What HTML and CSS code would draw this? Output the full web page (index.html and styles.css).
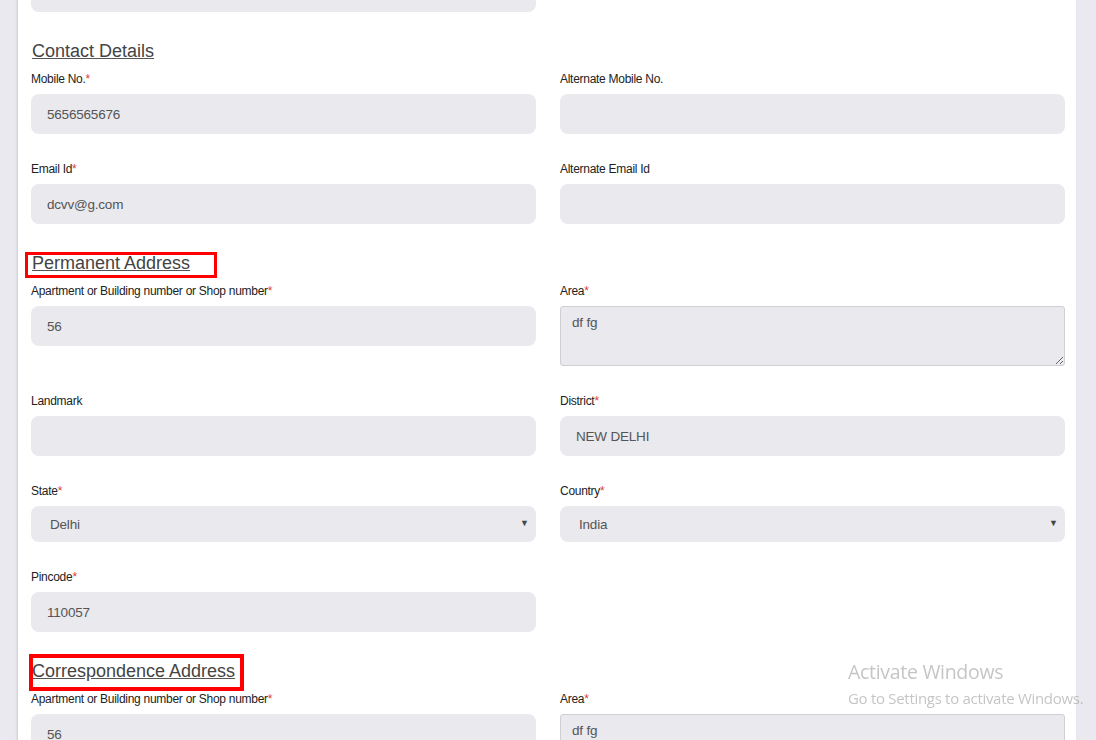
FILE: index.html
```html
<!DOCTYPE html>
<html lang="en">

<head>
  <meta charset="UTF-8">
  <meta name="viewport" content="width=device-width, initial-scale=1.0">
  <title>Registration - Address Details</title>
  <link rel="stylesheet" href="styles.css">
</head>

<body>
  <div id="container">
    <form name="regForm" class="regForm">
      <!-- previous row (scrolled) -->
      <div class="row first">
        <div class="field"><input type="text" class="inp"></div>
        <div class="field"></div>
      </div>

      <h3 class="secTitle"><span>Contact Details</span></h3>
      <div class="row">
        <div class="field">
          <label>Mobile No.<em>*</em></label>
          <input type="text" class="inp" value="5656565676">
        </div>
        <div class="field">
          <label>Alternate Mobile No.</label>
          <input type="text" class="inp">
        </div>
      </div>
      <div class="row">
        <div class="field">
          <label>Email Id<em>*</em></label>
          <input type="text" class="inp" value="dcvv@g.com">
        </div>
        <div class="field">
          <label>Alternate Email Id</label>
          <input type="text" class="inp">
        </div>
      </div>

      <h3 class="secTitle"><span class="marked perm">Permanent Address</span></h3>
      <div class="row">
        <div class="field">
          <label>Apartment or Building number or Shop number<em>*</em></label>
          <input type="text" class="inp" value="56">
        </div>
        <div class="field">
          <label>Area<em>*</em></label>
          <textarea class="area">df fg</textarea>
        </div>
      </div>
      <div class="row">
        <div class="field">
          <label>Landmark</label>
          <input type="text" class="inp">
        </div>
        <div class="field">
          <label>District<em>*</em></label>
          <input type="text" class="inp" value="NEW DELHI">
        </div>
      </div>
      <div class="row">
        <div class="field">
          <label>State<em>*</em></label>
          <span class="selWrap">
            <select class="sel">
              <option>Delhi</option>
            </select>
          </span>
        </div>
        <div class="field">
          <label>Country<em>*</em></label>
          <span class="selWrap">
            <select class="sel">
              <option>India</option>
            </select>
          </span>
        </div>
      </div>
      <div class="row">
        <div class="field">
          <label>Pincode<em>*</em></label>
          <input type="text" class="inp" value="110057">
        </div>
        <div class="field"></div>
      </div>

      <h3 class="secTitle second"><span class="marked corr">Correspondence Address</span></h3>
      <div class="row">
        <div class="field">
          <label>Apartment or Building number or Shop number<em>*</em></label>
          <input type="text" class="inp" value="56">
        </div>
        <div class="field">
          <label>Area<em>*</em></label>
          <textarea class="area">df fg</textarea>
        </div>
      </div>
    </form>
  </div>

  <div class="winMark">
    <p class="big">Activate Windows</p>
    <p>Go to Settings to activate Windows.</p>
  </div>
</body>

</html>
```

FILE: styles.css
```css
html,
body {
  margin: 0;
  padding: 0;
  height: 100%;
  overflow: hidden;
}

body {
  background-color: #e9e9ef;
  font-family: "Liberation Sans", Arial, sans-serif;
  color: #222;
}

#container {
  width: 1058px;
  min-height: 100%;
  margin-left: 18px;
  background-color: #fff;
  box-shadow: -1px 0 2px rgba(0, 0, 0, 0.12);
}

.regForm {
  padding: 0 11px 40px 13px;
}

.row {
  display: grid;
  grid-template-columns: 505px 505px;
  column-gap: 24px;
  margin-bottom: 26px;
}

.row.first {
  margin-top: -28px;
}

.field label {
  display: block;
  height: 17px;
  line-height: 18px;
  margin-bottom: 7px;
  font-size: 12px;
  letter-spacing: -0.28px;
  color: #222;
}

.field label em {
  font-style: normal;
  color: #e0403c;
}

.inp,
.sel,
.area {
  box-sizing: border-box;
  width: 100%;
  font-family: "Liberation Sans", Arial, sans-serif;
  font-size: 13.5px;
  letter-spacing: -0.2px;
  color: #555;
  background-color: #e9e9ee;
  outline: none;
}

.inp {
  display: block;
  height: 40px;
  padding: 0 16px;
  border: none;
  border-radius: 8px;
}

/* 선택 박스 */
.selWrap {
  position: relative;
  display: block;
}

.sel {
  display: block;
  height: 36px;
  padding: 0 19px;
  border: none;
  border-radius: 8px;
  appearance: none;
  -webkit-appearance: none;
}

.selWrap::after {
  content: "\25BC";
  position: absolute;
  right: 7px;
  top: 12px;
  font-size: 9px;
  color: #444;
  pointer-events: none;
}

.area {
  display: block;
  height: 60px;
  padding: 8px 11px;
  border: 1px solid #cfcfd4;
  border-radius: 3px;
  resize: vertical;
}

/* 섹션 제목 */
.secTitle {
  height: 26px;
  line-height: 26px;
  margin: 0 0 6px;
  font-size: 18px;
  font-weight: normal;
  color: #444;
  padding-left: 1px;
}

.secTitle.second {
  margin-top: 1px;
  margin-bottom: 6px;
}

.secTitle span {
  position: relative;
  text-decoration: underline;
  text-decoration-color: #555;
}

.marked::before {
  content: "";
  position: absolute;
  border: 3px solid #f00;
  pointer-events: none;
}

.perm::before {
  left: -7px;
  top: -1px;
  width: 186px;
  height: 20px;
}

.corr::before {
  left: -3px;
  top: -7px;
  width: 207px;
  height: 29px;
  border-width: 4px;
}

/* 윈도우 정품 인증 안내 */
.winMark {
  position: fixed;
  left: 848px;
  top: 659px;
  font-family: "Open Sans", "Noto Sans", sans-serif;
  color: rgba(150, 150, 150, 0.55);
  pointer-events: none;
}

.winMark p {
  margin: 0;
  font-size: 15px;
  letter-spacing: -0.3px;
  white-space: nowrap;
}

.winMark .big {
  font-size: 19.5px;
  line-height: 26px;
  margin-bottom: 3px;
}
```
